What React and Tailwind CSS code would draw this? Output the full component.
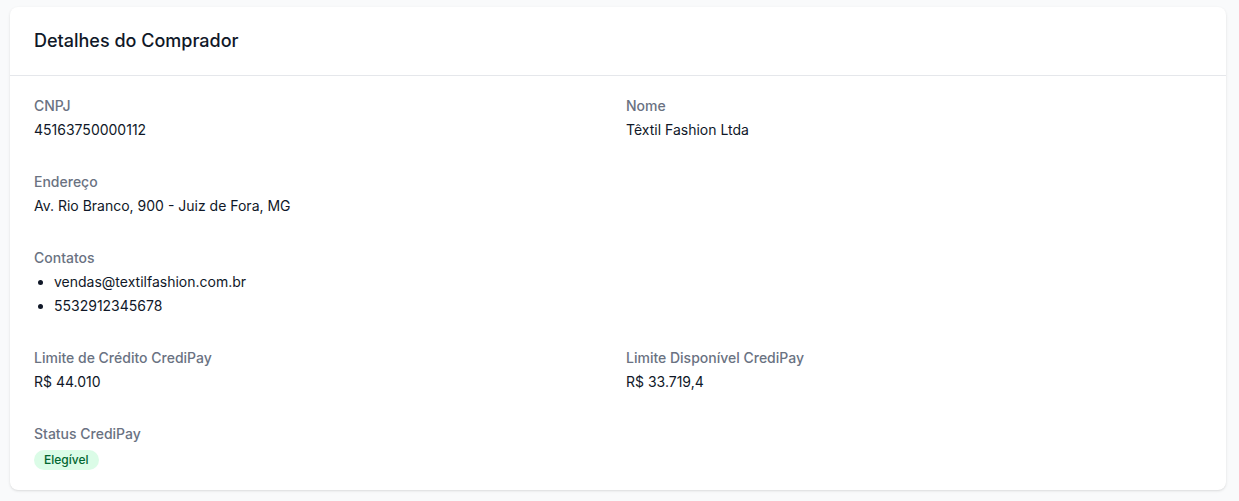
import React from "react";

function Field({ label, children }) {
  return (
    <div>
      <div className="text-sm leading-5 font-medium text-gray-500">{label}</div>
      <div className="mt-1 text-sm leading-5 text-gray-900">{children}</div>
    </div>
  );
}

export default function App() {
  return (
    <div
      className="min-h-[501px] bg-gray-50 pt-[7px] pl-[10px] pr-[13px] pb-3"
      style={{ fontFamily: "Inter, 'Noto Sans', sans-serif" }}
    >
      <div className="bg-white rounded-lg shadow-sm">
        <div className="px-6 py-5 border-b border-gray-200">
          <h2 className="text-lg leading-7 font-medium text-gray-900">Detalhes do Comprador</h2>
        </div>
        <div className="px-6 py-5 grid grid-cols-2 gap-x-4 gap-y-8">
          <Field label="CNPJ">45163750000112</Field>
          <Field label="Nome">Têxtil Fashion Ltda</Field>
          <div className="col-span-2">
            <Field label="Endereço">Av. Rio Branco, 900 - Juiz de Fora, MG</Field>
          </div>
          <div className="col-span-2">
            <div className="text-sm leading-5 font-medium text-gray-500">Contatos</div>
            <ul className="mt-1 list-disc pl-5 text-sm text-gray-900 space-y-1">
              <li className="leading-5">vendas@textilfashion.com.br</li>
              <li className="leading-5">5532912345678</li>
            </ul>
          </div>
          <Field label="Limite de Crédito CrediPay">R$ 44.010</Field>
          <Field label="Limite Disponível CrediPay">R$ 33.719,4</Field>
          <div className="col-span-2">
            <div className="text-sm leading-5 font-medium text-gray-500">Status CrediPay</div>
            <div className="mt-1.5 flex">
              <span className="inline-flex items-center rounded-full bg-green-100 px-2.5 h-5 text-xs leading-4 font-medium text-green-800">
                Elegível
              </span>
            </div>
          </div>
        </div>
      </div>
    </div>
  );
}
